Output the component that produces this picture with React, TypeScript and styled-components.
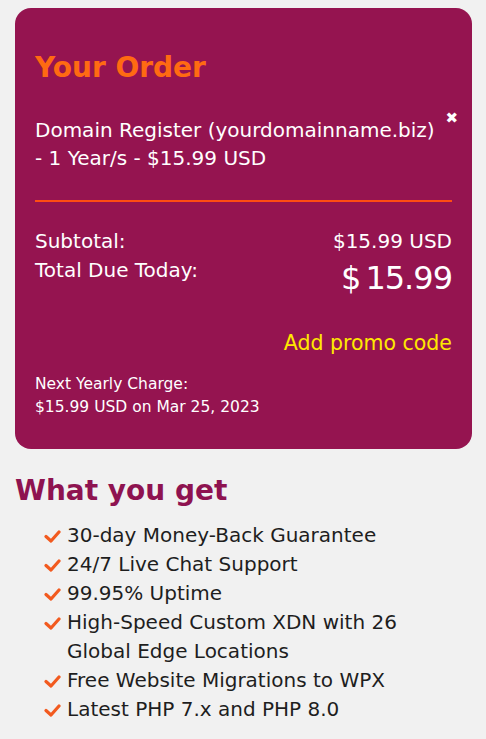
import { createGlobalStyle, styled } from "styled-components";

const GlobalStyle = createGlobalStyle`
  body {
    margin: 0;
    background: #f1f1f1;
    font-family: "DejaVu Sans", "Noto Sans", sans-serif;
  }
`;

const Page = styled.div`
  padding: 8px 14px 0 15px;
`;

const OrderCard = styled.section`
  background: #951450;
  border-radius: 16px;
  padding: 40px 20px 30px 20px;
  color: #fff;
`;

const CardTitle = styled.h2`
  margin: 0 0 28px;
  font-size: 28px;
  line-height: 40px;
  font-weight: 700;
  color: #ff6a12;
`;

const ItemRow = styled.div`
  position: relative;
  padding-right: 12px;
  font-size: 20px;
  line-height: 28px;
  padding-bottom: 28px;
  border-bottom: 2px solid #ff4d12;
`;

const CloseIcon = styled.span`
  position: absolute;
  right: -6px;
  top: -5px;
  font-size: 15px;
  font-weight: 700;
  line-height: 1;
`;

const Totals = styled.div`
  display: grid;
  grid-template-columns: 1fr auto;
  align-items: start;
  margin-top: 27px;
  font-size: 20px;
  line-height: 24px;
  row-gap: 5px;
`;

const Amount = styled.div<{ $big?: boolean }>`
  text-align: right;
  font-size: ${({ $big }) => ($big ? "32px" : "20px")};
  line-height: ${({ $big }) => ($big ? "40px" : "24px")};
  letter-spacing: ${({ $big }) => ($big ? "-1px" : "normal")};
`;

const Currency = styled.span`
  margin-right: 5px;
`;

const PromoLink = styled.a`
  display: block;
  margin-top: 33px;
  text-align: right;
  color: #ffe800;
  font-size: 20.5px;
  line-height: 24px;
  text-decoration: none;
`;

const NextCharge = styled.p`
  margin: 18px 0 0;
  font-size: 15.5px;
  line-height: 23px;
`;

const Features = styled.section`
  padding: 24px 0 0 0;
`;

const FeaturesTitle = styled.h2`
  margin: 0 0 12px;
  font-size: 28px;
  line-height: 36px;
  font-weight: 700;
  color: #8e1350;
`;

const FeatureList = styled.ul`
  list-style: none;
  margin: 0;
  padding: 0 30px 0 29px;
`;

const FeatureItem = styled.li`
  display: flex;
  gap: 6px;
  font-size: 20px;
  line-height: 29px;
  color: #1e1e1e;
`;

const Check = styled.svg`
  flex: none;
  width: 17px;
  height: 29px;
`;

const features = [
  "30-day Money-Back Guarantee",
  "24/7 Live Chat Support",
  "99.95% Uptime",
  "High-Speed Custom XDN with 26 Global Edge Locations",
  "Free Website Migrations to WPX",
  "Latest PHP 7.x and PHP 8.0",
];

export default function App() {
  return (
    <>
      <GlobalStyle />
      <Page>
        <OrderCard>
          <CardTitle>Your Order</CardTitle>
          <ItemRow>
            Domain Register (yourdomainname.biz) - 1 Year/s - $15.99 USD
            <CloseIcon>✖</CloseIcon>
          </ItemRow>
          <Totals>
            <div>Subtotal:</div>
            <Amount>$15.99 USD</Amount>
            <div>Total Due Today:</div>
            <Amount $big>
              <Currency>$</Currency>15.99
            </Amount>
          </Totals>
          <PromoLink href="#">Add promo code</PromoLink>
          <NextCharge>
            Next Yearly Charge:
            <br />
            $15.99 USD on Mar 25, 2023
          </NextCharge>
        </OrderCard>
        <Features>
          <FeaturesTitle>What you get</FeaturesTitle>
          <FeatureList>
            {features.map((f) => (
              <FeatureItem key={f}>
                <Check viewBox="0 0 17 29">
                  <path
                    d="M2 15.5 L7 20 L15 11"
                    fill="none"
                    stroke="#f25a1f"
                    strokeWidth="3.2"
                    strokeLinecap="round"
                    strokeLinejoin="round"
                  />
                </Check>
                <span>{f}</span>
              </FeatureItem>
            ))}
          </FeatureList>
        </Features>
      </Page>
    </>
  );
}
